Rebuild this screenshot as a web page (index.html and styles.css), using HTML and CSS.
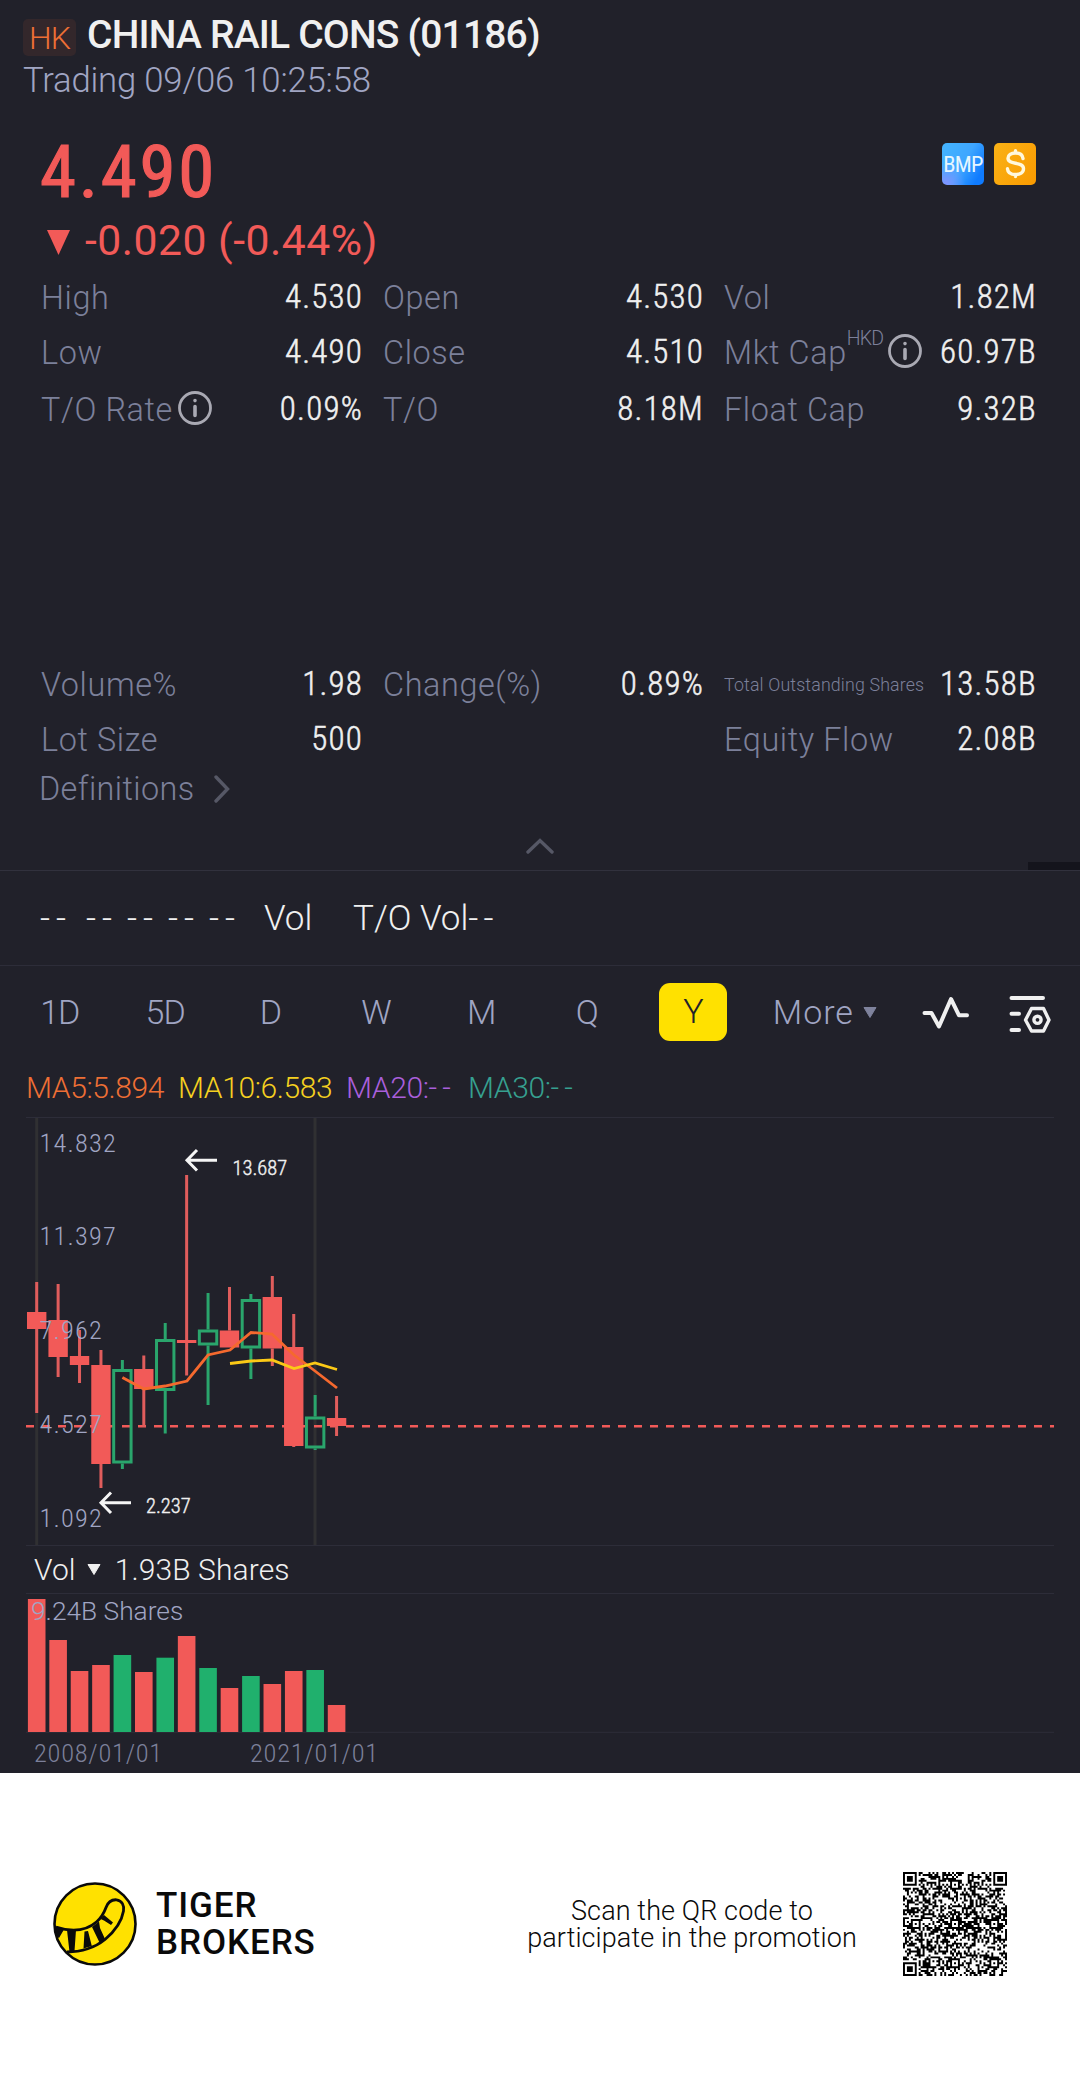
FILE: index.html
```html
<!DOCTYPE html>
<html lang="en">
<head>
    <meta charset="UTF-8">
    <meta name="viewport" content="width=device-width, initial-scale=1.0">
    <title>CHINA RAIL CONS (01186)</title>
    <link rel="stylesheet" href="styles.css">
</head>
<body>
    <div class="app">
        <header class="header">
            <div class="title-row">
                <span class="market">HK</span>
                <h1 class="title">CHINA RAIL CONS (01186)</h1>
            </div>
            <div class="status">Trading 09/06 10:25:58</div>
        </header>

        <section class="quote">
            <div class="price-row">
                <div class="price">4.490</div>
                <div class="badges">
                    <span class="badge badge-bmp">BMP</span>
                    <span class="badge badge-cash">
                        <svg width="42" height="42" viewBox="0 0 42 42" fill="none" stroke="#fff8dc" stroke-width="3.4" stroke-linecap="round">
                            <path d="M29 15.500C28.500 11.500 25.500 10 21.500 10C17 10 14 12 14 15.300C14 22.500 29.500 18 29.500 25.800C29.500 29.500 26 31.500 21.500 31.500C17 31.500 13.800 29.500 13.500 25.800M21.500 7.800V10M21.500 31.500V33.500"/>
                        </svg>
                    </span>
                </div>
            </div>
            <div class="change">
                <svg class="down" width="23" height="25" viewBox="0 0 23 25"><path d="M0 0H23L11.500 25Z" fill="#f25a58"/></svg>
                <span>-0.020 (-0.44%)</span>
            </div>

            <div class="stats">
                <div class="stat"><span class="label">High</span><span class="value">4.530</span></div>
                <div class="stat"><span class="label">Open</span><span class="value">4.530</span></div>
                <div class="stat"><span class="label">Vol</span><span class="value">1.82M</span></div>
                <div class="stat"><span class="label">Low</span><span class="value">4.490</span></div>
                <div class="stat"><span class="label">Close</span><span class="value">4.510</span></div>
                <div class="stat">
                    <span class="label">Mkt Cap</span><span class="unit">HKD</span>
                    <svg class="info" width="34" height="34" viewBox="0 0 34 34"><circle cx="17" cy="17" r="15.500"/><path d="M17 15.500V24.500M17 9.500V9.600"/></svg>
                    <span class="value">60.97B</span>
                </div>
                <div class="stat">
                    <span class="label">T/O Rate</span>
                    <svg class="info" width="34" height="34" viewBox="0 0 34 34"><circle cx="17" cy="17" r="15.500"/><path d="M17 15.500V24.500M17 9.500V9.600"/></svg>
                    <span class="value">0.09%</span>
                </div>
                <div class="stat"><span class="label">T/O</span><span class="value">8.18M</span></div>
                <div class="stat"><span class="label">Float Cap</span><span class="value">9.32B</span></div>
            </div>

            <div class="stats stats-more">
                <div class="stat"><span class="label">Volume%</span><span class="value">1.98</span></div>
                <div class="stat"><span class="label">Change(%)</span><span class="value">0.89%</span></div>
                <div class="stat"><span class="label label-small">Total Outstanding Shares</span><span class="value">13.58B</span></div>
                <div class="stat"><span class="label">Lot Size</span><span class="value">500</span></div>
                <div class="stat"></div>
                <div class="stat"><span class="label">Equity Flow</span><span class="value">2.08B</span></div>
            </div>

            <div class="definitions">
                <span>Definitions</span>
                <svg width="16" height="28" viewBox="0 0 16 28"><path d="M2 2L13.500 14L2 26"/></svg>
            </div>
            <div class="collapse">
                <svg width="28" height="16" viewBox="0 0 28 16"><path d="M2 14L14 2.500L26 14"/></svg>
                <span class="scroll-mark"></span>
            </div>
        </section>

        <section class="index-row">
            <span class="dash dash-first">--</span>
            <span class="dash">--</span>
            <span class="dash">--</span>
            <span class="dash">--</span>
            <span class="dash">--</span>
            <span class="index-vol">Vol</span>
            <span>T/O Vol<span class="dashes">--</span></span>
        </section>

        <nav class="tabs">
            <span class="tab">1D</span>
            <span class="tab">5D</span>
            <span class="tab">D</span>
            <span class="tab">W</span>
            <span class="tab">M</span>
            <span class="tab">Q</span>
            <span class="tab"><b class="active">Y</b></span>
            <span class="more">More
                <svg width="14" height="11" viewBox="0 0 14 11"><path d="M1 .500H13L7 10.500Z" fill="#7f839d" stroke="#7f839d" stroke-linejoin="round"/></svg>
            </span>
            <svg class="tool" width="48" height="34" viewBox="0 0 48 34"><path d="M2.500 18H9.500L17 31.500L29 4L37 20.300H45"/></svg>
            <svg class="tool tool-settings" width="42" height="38" viewBox="0 0 42 38"><path d="M2.500 3H34M2.500 18.800H10M2.500 35H10"/><path class="thin" d="M22.500 13.500H34.500L40 25L34.500 36H22.500L16.500 25Z"/><circle class="thin" cx="28.500" cy="24.800" r="3.600"/></svg>
        </nav>

        <div class="ma-row">
            <span class="ma5">MA5:5.894</span>
            <span class="ma10">MA10:6.583</span>
            <span class="ma20">MA20:<span class="dashes">--</span></span>
            <span class="ma30">MA30:<span class="dashes">--</span></span>
        </div>

        <!-- candles are filled in by chart.js -->
        <svg class="kline" width="1080" height="429" viewBox="0 1117 1080 429">
            <path class="rule" d="M26 1117.500H1054M26 1545.500H1054"/>
            <path class="year" d="M36.700 1118V1545M315 1118V1545"/>
            <path class="last" d="M26 1426.300H1054"/>
            <g id="candles"></g>
            <polyline class="line5" points="122.400,1377.500 143.800,1389 165,1386 187,1381 208,1355 230,1350 251,1332.500 272,1334 294,1355 315,1371 337,1388"/>
            <polyline class="line10" points="230,1363.500 251,1361 272,1360 294,1368.500 315,1363 337,1369.500"/>
            <g class="axis">
                <text x="39.500" y="1152">14.832</text>
                <text x="39.500" y="1245">11.397</text>
                <text x="39.500" y="1339">7.962</text>
                <text x="39.500" y="1433">4.527</text>
                <text x="39.500" y="1527">1.092</text>
            </g>
            <path class="arrow" d="M217 1160.300H188M197 1150L187 1160.300L197 1170.500M131 1502.700H102M111 1492.500L101 1502.700L111 1513"/>
            <g class="peak">
                <text x="232.500" y="1174.700">13.687</text>
                <text x="146" y="1513">2.237</text>
            </g>
        </svg>

        <div class="vol-row">
            <span>Vol</span>
            <svg width="14" height="11" viewBox="0 0 14 11"><path d="M1 .500H13L7 10.500Z" fill="#f0f0f0" stroke="#f0f0f0" stroke-linejoin="round"/></svg>
            <span>1.93B Shares</span>
        </div>

        <svg class="volume" width="1080" height="140" viewBox="0 1593 1080 140">
            <path class="rule" d="M26 1593.500H1054M26 1732.300H1054"/>
            <g id="bars"></g>
            <text class="max-vol" x="31" y="1620">9.24B Shares</text>
        </svg>

        <div class="dates">
            <span>2008/01/01</span>
            <span>2021/01/01</span>
        </div>
    </div>

    <footer class="footer">
        <svg class="logo" width="84" height="84" viewBox="0 0 84 84">
            <circle cx="42" cy="42" r="40.500" fill="#ffe100" stroke="#0a0a0a" stroke-width="2.600"/>
            <path d="M3 45C18 50 33 49 43.700 39.700C49 35 51 31 53 25.500C55 20 59 17.500 63.500 17.800C69 18.500 71.500 23.500 70.500 29C69 38 62 49 52 57.500C42 65.500 30 70 14 70" fill="none" stroke="#0a0a0a" stroke-width="2.800"/>
            <path d="M2 44L11 47.500L6 56L3 54ZM14 48H23L21.500 69L16.500 70ZM31.500 49.500L35 49L38.800 64L30.500 66.500ZM39 45L46 39.500L47 46L52 57L46.500 60.500ZM47.500 37L51 33L60 40.500L58 43L51 38.500Z" fill="#0a0a0a"/>
        </svg>
        <div class="brand">TIGER<br>BROKERS</div>
        <p class="scan"><span>Scan the QR code to</span><span>participate in the promotion</span></p>
        <svg class="qr" width="104" height="104" viewBox="0 0 53 53"><path id="qr"/></svg>
    </footer>

    <script src="chart.js"></script>
</body>
</html>
```
FILE: styles.css
```css
* {
    box-sizing: border-box;
}
body {
    margin: 0;
    width: 1080px;
    background: #fff;
    font-family: Roboto, sans-serif;
    font-weight: 300;
}
svg {
    display: block;
    flex: none;
}
.app {
    height: 1773px;
    background: #21212a;
    color: #f0f0f0;
    overflow: hidden;
}

/* header */
.header {
    padding: 11px 23px 0;
}
.title-row {
    display: flex;
    gap: 11px;
    height: 47px;
}
.market {
    width: 53px;
    height: 37px;
    margin-top: 8px;
    border-radius: 5px;
    background: #33272b;
    color: #ee6f35;
    font-size: 32px;
    line-height: 39px;
    letter-spacing: -1px;
    text-align: center;
}
.title {
    margin: 0;
    font-size: 39px;
    font-weight: 500;
    line-height: 49px;
    letter-spacing: -.8px;
    white-space: nowrap;
}
.status {
    color: #a0a5c3;
    font-size: 34.7px;
    line-height: 44px;
    letter-spacing: -.2px;
}

/* quote */
.quote {
    height: 769px;
    padding: 28px 44px 0 41px;
    border-bottom: 1px solid #31313d;
}
.price-row {
    display: flex;
    justify-content: space-between;
}
.price {
    margin-left: -1px;
    color: #f25a58;
    font-family: "Roboto Condensed", Roboto, sans-serif;
    font-size: 73px;
    font-weight: 400;
    line-height: 84px;
    letter-spacing: 2.7px;
    -webkit-text-stroke: 1.2px #f25a58;
}
.badges {
    display: flex;
    gap: 10px;
    padding-top: 13px;
}
.badge {
    width: 42px;
    height: 42px;
    border-radius: 5px;
    overflow: hidden;
}
.badge-bmp {
    background: radial-gradient(circle at 10% 95%, #7f94ff, transparent 35%), linear-gradient(120deg, #45b5ff, #3ea6ff 50%, #0f7bff 85%);
    color: #e6f6ff;
    font-family: "Roboto Condensed", Roboto, sans-serif;
    font-size: 22.5px;
    font-weight: 400;
    line-height: 43px;
    letter-spacing: -.8px;
    text-align: center;
}
.badge-cash {
    background: linear-gradient(120deg, #fab216, #f99a00);
}
.change {
    display: flex;
    align-items: center;
    gap: 15px;
    height: 56px;
    padding-left: 6px;
    color: #f25a58;
    font-size: 42.7px;
    font-weight: 400;
    line-height: 52px;
    letter-spacing: .5px;
}
.change span {
    margin-top: -5px;
}
.stats {
    display: grid;
    grid-template-columns: 320px 319px 311px;
    grid-template-rows: 55px 55px 59px;
    column-gap: 22px;
}
.stats-more {
    grid-template-rows: 55px 55px;
    margin-top: 218px;
}
.stat {
    display: flex;
    align-items: center;
    white-space: nowrap;
}
.label {
    color: #7c809a;
    font-size: 32.4px;
    letter-spacing: .6px;
}
.label-small {
    font-size: 17.8px;
    letter-spacing: .15px;
}
.unit {
    margin: 0 0 28px;
    color: #7c809a;
    font-size: 19.5px;
    letter-spacing: -.8px;
}
.value {
    margin: -2px -2px 0 auto;
    font-family: "Roboto Condensed", Roboto, sans-serif;
    font-size: 33px;
    letter-spacing: 1.2px;
    -webkit-text-stroke: .5px #f0f0f0;
}
.info {
    margin: -4px 0 0 5px;
    fill: none;
    stroke: #a9a9b3;
    stroke-width: 2.8;
    stroke-linecap: round;
}
.info path {
    stroke-width: 3.6;
}
.definitions {
    display: flex;
    align-items: center;
    gap: 19px;
    height: 44px;
    margin-left: -2px;
    color: #7c809a;
    font-size: 32.4px;
    letter-spacing: .4px;
}
.definitions svg,
.collapse svg {
    fill: none;
    stroke: #565866;
    stroke-width: 3.4;
    stroke-linecap: round;
}
.collapse {
    position: relative;
    height: 59px;
    margin: 0 -44px 0 -41px;
    padding: 27px 0 0 526px;
}
.scroll-mark {
    position: absolute;
    right: 0;
    bottom: 0;
    width: 52px;
    height: 8px;
    background: #14141c;
}

/* index summary */
.index-row {
    display: flex;
    align-items: center;
    height: 95px;
    padding-left: 40px;
    border-bottom: 1px solid #2d2d39;
    font-size: 35px;
    white-space: nowrap;
}
.dash {
    width: 41px;
    letter-spacing: 6px;
}
.dash-first {
    width: 46px;
}
.dashes {
    letter-spacing: 5px;
}
.index-vol {
    width: 89px;
    margin-left: 14px;
}

/* period tabs */
.tabs {
    display: flex;
    align-items: center;
    height: 92px;
    padding-left: 7px;
    color: #a0a5c3;
    font-size: 34px;
    line-height: 40px;
    letter-spacing: -1px;
}
.tab {
    width: 105.4px;
    text-align: center;
}
.active {
    display: block;
    width: 68px;
    height: 58px;
    margin: 0 0 0 19.5px;
    border-radius: 11px;
    background: #ffe100;
    color: #21212a;
    font-weight: 300;
    line-height: 57px;
}
.more {
    display: flex;
    align-items: center;
    gap: 9px;
    width: 149px;
    margin-left: 28px;
    letter-spacing: 1px;
}
.tool {
    fill: none;
    stroke: #f0f0f0;
    stroke-width: 4;
    stroke-linecap: round;
    stroke-linejoin: round;
}
.tool-settings {
    margin: 3px 0 0 39px;
}
.thin {
    stroke-width: 3.4;
}

/* chart */
.ma-row {
    display: flex;
    height: 59px;
    padding-left: 26px;
    font-size: 30px;
    line-height: 59px;
    letter-spacing: -.4px;
    white-space: nowrap;
}
.ma5 {
    width: 152px;
    color: #ee6f35;
}
.ma10 {
    width: 168px;
    color: #f5d020;
}
.ma20 {
    width: 122px;
    color: #a95fdb;
}
.ma30 {
    color: #36a090;
}
.rule {
    stroke: #2d2d39;
}
.year {
    stroke: #303032;
    stroke-width: 3;
}
.last {
    stroke: #f25a58;
    stroke-width: 2.6;
    stroke-dasharray: 8 8;
}
.line5,
.line10 {
    fill: none;
    stroke: #f5692e;
    stroke-width: 2.8;
}
.line10 {
    stroke: #fbc916;
}
.axis text {
    fill: #a0a5c3;
    font-family: "Roboto Condensed", Roboto, sans-serif;
    font-size: 26.3px;
    letter-spacing: 1.2px;
}
.peak text {
    fill: #f0f0f0;
    stroke: #f0f0f0;
    stroke-width: .4;
    font-family: "Roboto Condensed", Roboto, sans-serif;
    font-size: 20.5px;
}
.max-vol {
    fill: #a0a5c3;
    font-size: 26.3px;
}
.arrow {
    fill: none;
    stroke: #f5f5f5;
    stroke-width: 3;
}
.up-fill {
    fill: #20b06d;
}
.up-stroke {
    fill: none;
    stroke: #2aa56c;
    stroke-width: 3;
}
.down-fill {
    fill: #f25a58;
}
.down-stroke {
    stroke: #e05d5c;
    stroke-width: 3;
}
.vol-row {
    display: flex;
    align-items: center;
    height: 47px;
    padding-left: 34px;
    font-size: 30px;
    letter-spacing: .1px;
}
.vol-row svg {
    margin: 0 14px 0 11px;
}
.dates {
    display: flex;
    gap: 87px;
    padding-left: 34px;
    color: #7c809a;
    font-family: "Roboto Condensed", Roboto, sans-serif;
    font-size: 26.5px;
    line-height: 40px;
    letter-spacing: .7px;
}

/* footer */
.footer {
    display: flex;
    align-items: center;
    height: 302px;
    padding-left: 53px;
    color: #0a0a0a;
}
.brand {
    width: 370px;
    margin-left: 19px;
    font-size: 35px;
    font-weight: 500;
    line-height: 37.5px;
    letter-spacing: .9px;
}
.scan {
    display: grid;
    width: 332px;
    margin: 2px 0 0;
    font-size: 27px;
    line-height: 27px;
    letter-spacing: .1px;
    text-align: center;
    white-space: nowrap;
}
.qr {
    margin-left: 45px;
}
```
FILE: chart.js
```js
// [direction, high, body top, body bottom, low, volume top]
const years = [
    ['down', 1282, 1312, 1329, 1413, 1599],
    ['down', 1284, 1320, 1357, 1377, 1640],
    ['down', 1330, 1356, 1365, 1383, 1671],
    ['down', 1350, 1365, 1464, 1488, 1665],
    ['up', 1360, 1369, 1463.5, 1469, 1655],
    ['down', 1355.5, 1369, 1389, 1427, 1672],
    ['up', 1323, 1339, 1391, 1433.5, 1657.7],
    ['down', 1175, 1340, 1343, 1375.5, 1636],
    ['up', 1293, 1329.5, 1345.5, 1405, 1668],
    ['down', 1287, 1330.5, 1347.5, 1347.5, 1688],
    ['up', 1294, 1299, 1348.5, 1379, 1676],
    ['down', 1276, 1297, 1348.5, 1366, 1684],
    ['down', 1314, 1347, 1446, 1447, 1671],
    ['up', 1395, 1416.5, 1448.5, 1450, 1670],
    ['down', 1396, 1418, 1426, 1436, 1705]
];

let candles = '';
let bars = '';
years.forEach(([dir, high, top, bottom, low, vol], i) => {
    const x = 36.7 + i * 21.42;
    candles += `<path class="${dir}-stroke" d="M${x} ${high}V${top}M${x} ${bottom}V${low}"/>`;
    if (dir === 'up') {
        candles += `<rect class="up-stroke" x="${x - 8.7}" y="${top + 1.5}" width="17.4" height="${bottom - top - 3}"/>`;
    } else {
        candles += `<rect class="down-fill" x="${x - 9.7}" y="${top}" width="19.4" height="${bottom - top}"/>`;
    }
    bars += `<rect class="${dir}-fill" x="${x - 8.8}" y="${vol}" width="17.6" height="${1732 - vol}"/>`;
});
document.getElementById('candles').innerHTML = candles;
document.getElementById('bars').innerHTML = bars;

// QR modules, 53 x 53
const size = 53;
const finders = [[0, 0], [size - 7, 0], [0, size - 7]];
const marks = [[26, 6], [6, 26], [26, 26], [46, 26], [26, 46], [46, 46]];
let seed = 1186;

function isDark(x, y) {
    seed = (seed * 1103515245 + 12345) % 2147483648;
    for (const [fx, fy] of finders) {
        const d = Math.max(Math.abs(x - fx - 3), Math.abs(y - fy - 3));
        if (d <= 4) return d !== 2 && d !== 4;
    }
    for (const [mx, my] of marks) {
        const d = Math.max(Math.abs(x - mx), Math.abs(y - my));
        if (d <= 2) return d !== 1;
    }
    if (x === 6 || y === 6) return (x + y) % 2 === 0;
    return seed / 2147483648 > 0.5;
}

let d = '';
for (let y = 0; y < size; y++) {
    for (let x = 0; x < size; x++) {
        if (isDark(x, y)) d += `M${x} ${y}h1v1h-1z`;
    }
}
document.getElementById('qr').setAttribute('d', d);
```
